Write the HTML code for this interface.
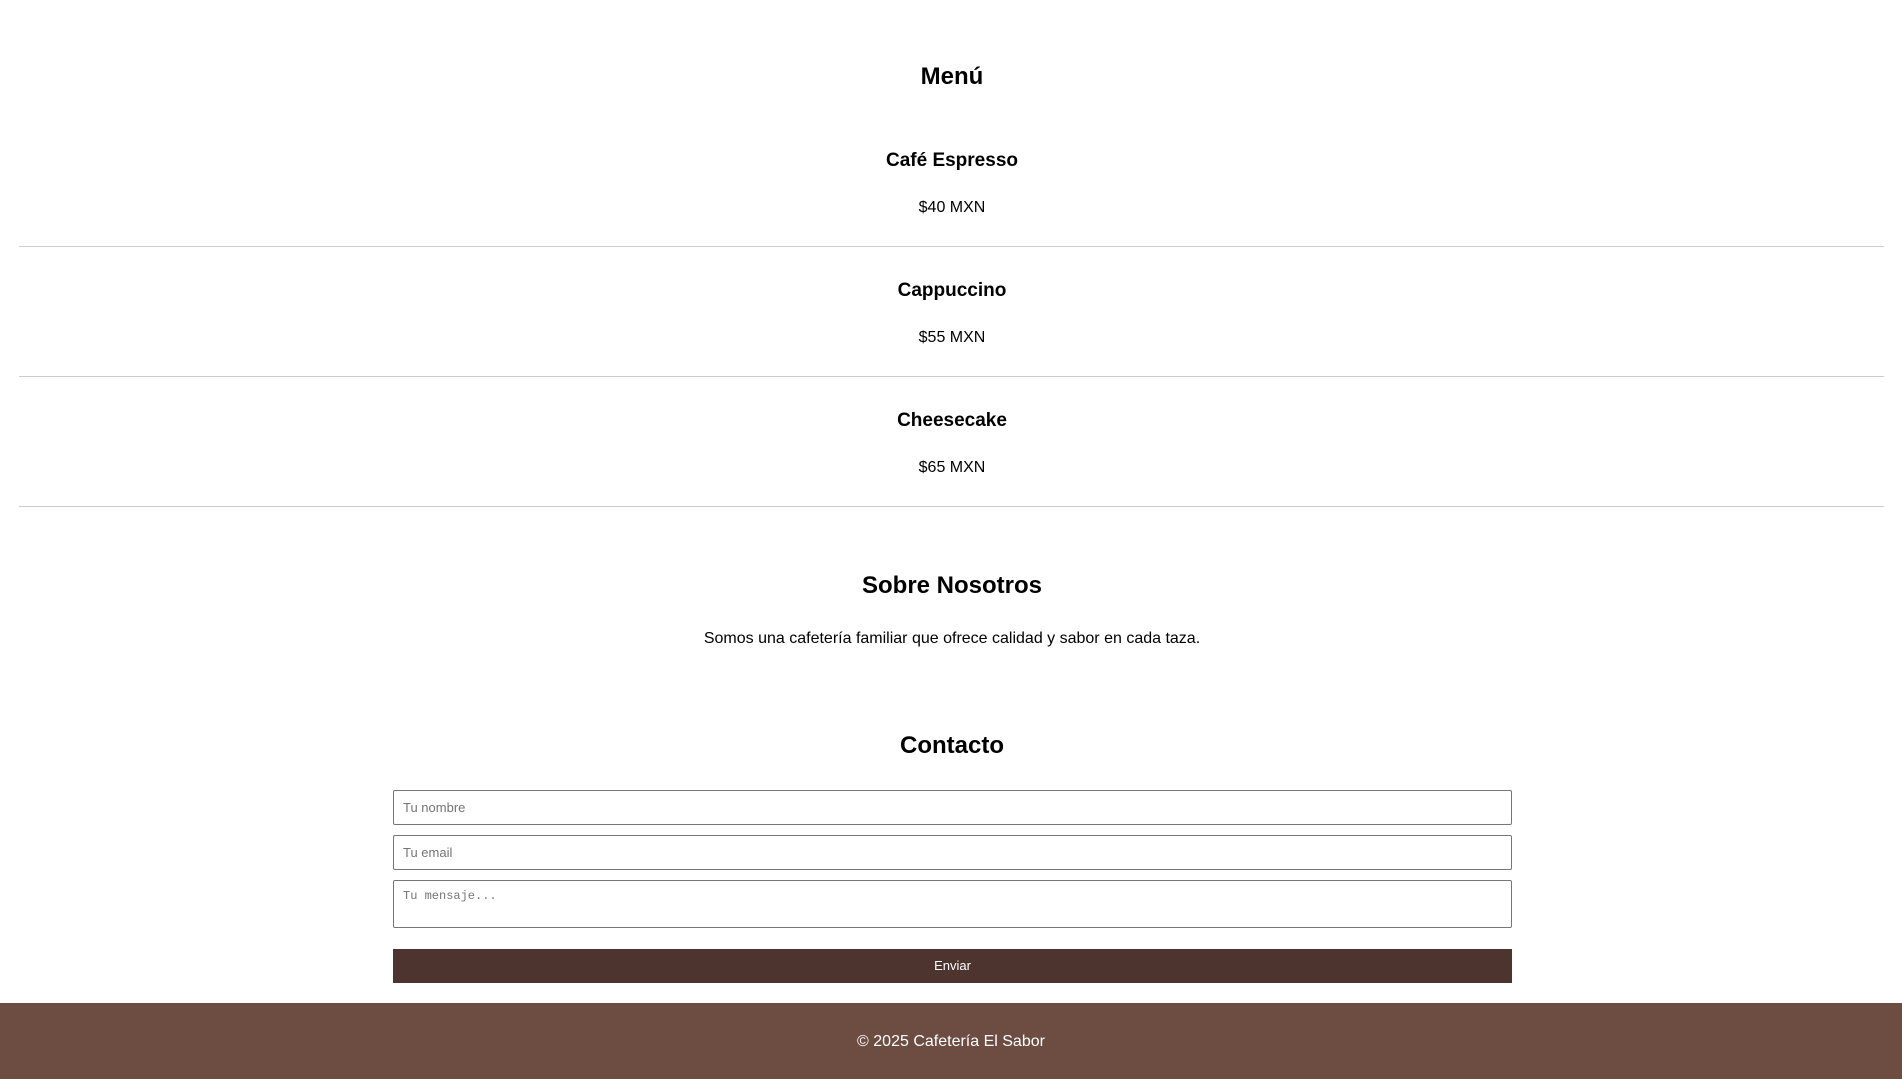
<!DOCTYPE html>
<html><head><meta charset="utf-8"><style>
body{margin:0;width:1902px;height:1079px;position:relative;font-family:"Liberation Sans",Arial,sans-serif;color:#000;background:#fff;overflow:hidden}
.c{position:absolute;left:1px;width:1902px;text-align:center;margin:0}
h2.c{font-size:24px;font-weight:bold}
h3.c{font-size:19px;font-weight:bold}
p.c{font-size:16px}
.hr{position:absolute;left:19px;width:1865px;height:1px;background:#ccc}
.in{position:absolute;left:393px;width:1119px;border:1px solid #767676;border-radius:2px;box-sizing:border-box;font-size:13px;color:#757575;padding-left:9px}
</style></head><body>
<h2 class="c" style="top:63px">Menú</h2>
<h3 class="c" style="top:150px">Café Espresso</h3>
<p class="c" style="top:199px">$40 MXN</p>
<div class="hr" style="top:246px"></div>
<h3 class="c" style="top:280px">Cappuccino</h3>
<p class="c" style="top:329px">$55 MXN</p>
<div class="hr" style="top:376px"></div>
<h3 class="c" style="top:410px">Cheesecake</h3>
<p class="c" style="top:459px">$65 MXN</p>
<div class="hr" style="top:506px"></div>
<h2 class="c" style="top:572px">Sobre Nosotros</h2>
<p class="c" style="top:630px">Somos una cafetería familiar que ofrece calidad y sabor en cada taza.</p>
<h2 class="c" style="top:732px">Contacto</h2>
<div class="in" style="top:790px;height:35px;line-height:33px">Tu nombre</div>
<div class="in" style="top:835px;height:35px;line-height:33px">Tu email</div>
<div class="in" style="top:880px;height:48px;padding-top:8px;font-family:'Liberation Mono',monospace;font-size:12px">Tu mensaje...</div>
<div style="position:absolute;left:393px;top:949px;width:1119px;height:34px;background:#4e342e;color:#fff;font-size:13px;text-align:center;line-height:34px">Enviar</div>
<div style="position:absolute;left:0;top:1003px;width:1902px;height:76px;background:#6d4c41;color:#fff;font-size:16px;text-align:center;line-height:78px">© 2025 Cafetería El Sabor</div>
</body></html>
